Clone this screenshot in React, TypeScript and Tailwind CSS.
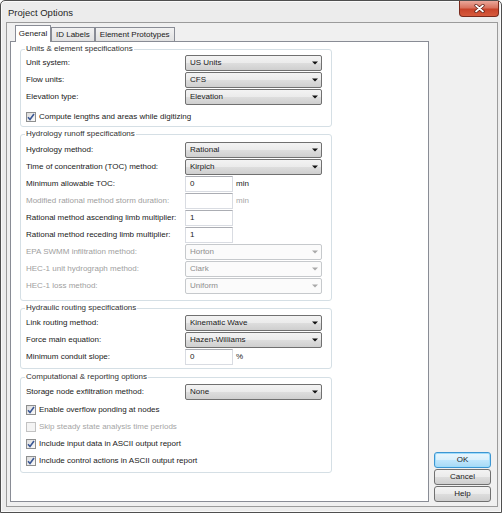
import type { ReactNode } from 'react';

const chromeBg = 'bg-[linear-gradient(#f3f3f3_0%,#ebebeb_48%,#dddddd_52%,#cfcfcf_100%)]';

function Arrow({ disabled = false }: { disabled?: boolean }) {
  return (
    <svg width="6" height="4" viewBox="0 0 6 4" className="shrink-0">
      <path d="M0 0.5h6L3 3.5z" fill={disabled ? '#a9a9a9' : '#111'} />
    </svg>
  );
}

function Combo({ value, disabled = false }: { value: string; disabled?: boolean }) {
  if (disabled) {
    return (
      <div className="flex h-[16px] w-[137px] items-center justify-between rounded-[2px] border border-[#c6c9cc] bg-[#fbfbfb] pr-[3px] pl-[4px] text-[#8e8e8e]">
        <span>{value}</span>
        <Arrow disabled />
      </div>
    );
  }
  return (
    <div
      className={`flex h-[16px] w-[137px] items-center justify-between rounded-[2px] border border-[#707070] ${chromeBg} pr-[3px] pl-[4px] text-[#1a1a1a]`}
    >
      <span>{value}</span>
      <Arrow />
    </div>
  );
}

function TextBox({ value = '', unit, disabled = false }: { value?: string; unit?: string; disabled?: boolean }) {
  return (
    <div className="flex items-center">
      <div className="flex h-[16px] w-[48px] items-center border border-[#d9dce2] border-t-[#abadb3] bg-white pl-[4px] text-[#1a1a1a]">
        {value}
      </div>
      {unit && <span className={`ml-[3px] ${disabled ? 'text-[#a5a5a5]' : 'text-[#1a1a1a]'}`}>{unit}</span>}
    </div>
  );
}

function Row({ label, disabled = false, children }: { label: string; disabled?: boolean; children: ReactNode }) {
  return (
    <div className="flex h-[17px] items-start">
      <span className={`flex h-[16px] w-[159px] items-center ${disabled ? 'text-[#a0a0a0]' : 'text-[#1a1a1a]'}`}>
        {label}
      </span>
      {children}
    </div>
  );
}

function Check({ label, checked = false, disabled = false }: { label: string; checked?: boolean; disabled?: boolean }) {
  return (
    <div className="flex h-[17px] items-center gap-[3px]">
      <span
        className={
          disabled
            ? 'flex size-[10px] items-center justify-center border border-[#c2c2c2] bg-[#f4f4f4]'
            : 'flex size-[10px] items-center justify-center border border-[#8e8f8f] bg-[linear-gradient(135deg,#dcdcdc,#fafafa)]'
        }
      >
        {checked && (
          <svg width="8" height="8" viewBox="0 0 8 8">
            <path d="M1 4.2 3 6.5 7 1" fill="none" stroke="#3a5795" strokeWidth="1.6" />
          </svg>
        )}
      </span>
      <span className={disabled ? 'text-[#a5a5a5]' : 'text-[#1a1a1a]'}>{label}</span>
    </div>
  );
}

function Group({ title, className, children }: { title: string; className: string; children: ReactNode }) {
  return (
    <fieldset className={`w-[312px] rounded-[3px] border border-[#d5dfe5] pl-[5px] ${className}`}>
      <legend className="-ml-[1px] px-[1px] leading-[10px] text-[#333]">{title}</legend>
      {children}
    </fieldset>
  );
}

function Tab({ label, active = false }: { label: string; active?: boolean }) {
  return active ? (
    <div className="relative z-10 -mb-[1px] flex h-[17px] w-[36px] items-start justify-center border border-b-0 border-[#898c95] bg-white pt-[3px]">
      {label}
    </div>
  ) : (
    <div className="flex h-[14px] items-center border border-b-0 border-[#898c95] bg-[linear-gradient(#f2f2f2,#e1e1e1)] px-[4px]">
      {label}
    </div>
  );
}

function DlgButton({ label, primary = false }: { label: string; primary?: boolean }) {
  return (
    <div
      className={
        primary
          ? 'flex h-[16px] items-center justify-center rounded-[3px] border border-[#3c96d2] bg-[linear-gradient(#eaf6fd_0%,#d9f0fc_48%,#bee6fd_52%,#a7d9f5_100%)] shadow-[inset_0_0_0_1px_#9fdcfb]'
          : `flex h-[16px] items-center justify-center rounded-[3px] border border-[#707070] ${chromeBg}`
      }
    >
      {label}
    </div>
  );
}

export default function App() {
  return (
    <div className="flex h-[513px] w-[502px] flex-col rounded-t-[5px] border border-[#4f4f4f] bg-[#ececec] font-['Liberation_Sans',Arial,sans-serif] text-[8px] leading-[10px] text-[#1a1a1a] shadow-[inset_0_0_0_1px_#fafafa]">
      <div className="flex h-[21px] shrink-0 items-start justify-between">
        <span className="pt-[6px] pl-[7px] text-[9.5px] leading-[12px] text-[#262626]">Project Options</span>
        <div className="mr-[2px] flex h-[16px] w-[40px] items-center justify-center rounded-b-[4px] border border-t-0 border-[#7a2a1c] bg-[linear-gradient(#eaa79a_0%,#d9735f_45%,#c8432a_55%,#d65a3c_100%)]">
          <svg width="11" height="9" viewBox="0 0 11 9">
            <path d="M2 1.5 9 7.5M9 1.5 2 7.5" stroke="#5a1c12" strokeWidth="3.2" strokeLinecap="round" />
            <path d="M2 1.5 9 7.5M9 1.5 2 7.5" stroke="#fff" strokeWidth="1.7" strokeLinecap="round" />
          </svg>
        </div>
      </div>

      <div className="mr-[3px] mb-[5px] ml-[5px] flex flex-1 border border-[#9b9b9b] bg-[#f0f0f0] pt-[2px] pb-[4px] pl-[3px]">
        <div className="flex w-[419px] flex-col">
          <div className="flex h-[16px] items-end pl-[5px]">
            <Tab label="General" active />
            <Tab label="ID Labels" />
            <Tab label="Element Prototypes" />
          </div>
          <div className="flex-1 border border-[#898c95] bg-white pl-[9px]">
            <Group title="Units & element specifications" className="mt-[2px] pt-[1px] pb-[1px]">
              <Row label="Unit system:">
                <Combo value="US Units" />
              </Row>
              <Row label="Flow units:">
                <Combo value="CFS" />
              </Row>
              <Row label="Elevation type:">
                <Combo value="Elevation" />
              </Row>
              <div className="mt-[2px]">
                <Check label="Compute lengths and areas while digitizing" checked />
              </div>
            </Group>

            <Group title="Hydrology runoff specifications" className="mt-[2px] pt-[3px] pb-[5px]">
              <Row label="Hydrology method:">
                <Combo value="Rational" />
              </Row>
              <Row label="Time of concentration (TOC) method:">
                <Combo value="Kirpich" />
              </Row>
              <Row label="Minimum allowable TOC:">
                <TextBox value="0" unit="min" />
              </Row>
              <Row label="Modified rational method storm duration:" disabled>
                <TextBox unit="min" disabled />
              </Row>
              <Row label="Rational method ascending limb multiplier:">
                <TextBox value="1" />
              </Row>
              <Row label="Rational method receding limb multiplier:">
                <TextBox value="1" />
              </Row>
              <Row label="EPA SWMM infiltration method:" disabled>
                <Combo value="Horton" disabled />
              </Row>
              <Row label="HEC-1 unit hydrograph method:" disabled>
                <Combo value="Clark" disabled />
              </Row>
              <Row label="HEC-1 loss method:" disabled>
                <Combo value="Uniform" disabled />
              </Row>
            </Group>

            <Group title="Hydraulic routing specifications" className="mt-[2px] pt-[2px] pb-[2px]">
              <Row label="Link routing method:">
                <Combo value="Kinematic Wave" />
              </Row>
              <Row label="Force main equation:">
                <Combo value="Hazen-Williams" />
              </Row>
              <Row label="Minimum conduit slope:">
                <TextBox value="0" unit="%" />
              </Row>
            </Group>

            <Group title="Computational & reporting options" className="mt-[3px] pt-[2px] pb-[3px]">
              <Row label="Storage node exfiltration method:">
                <Combo value="None" />
              </Row>
              <Check label="Enable overflow ponding at nodes" checked />
              <Check label="Skip steady state analysis time periods" disabled />
              <Check label="Include input data in ASCII output report" checked />
              <Check label="Include control actions in ASCII output report" checked />
            </Group>
          </div>
        </div>

        <div className="ml-[5px] flex w-[57px] flex-col justify-end gap-[1px]">
          <DlgButton label="OK" primary />
          <DlgButton label="Cancel" />
          <DlgButton label="Help" />
        </div>
      </div>
    </div>
  );
}
